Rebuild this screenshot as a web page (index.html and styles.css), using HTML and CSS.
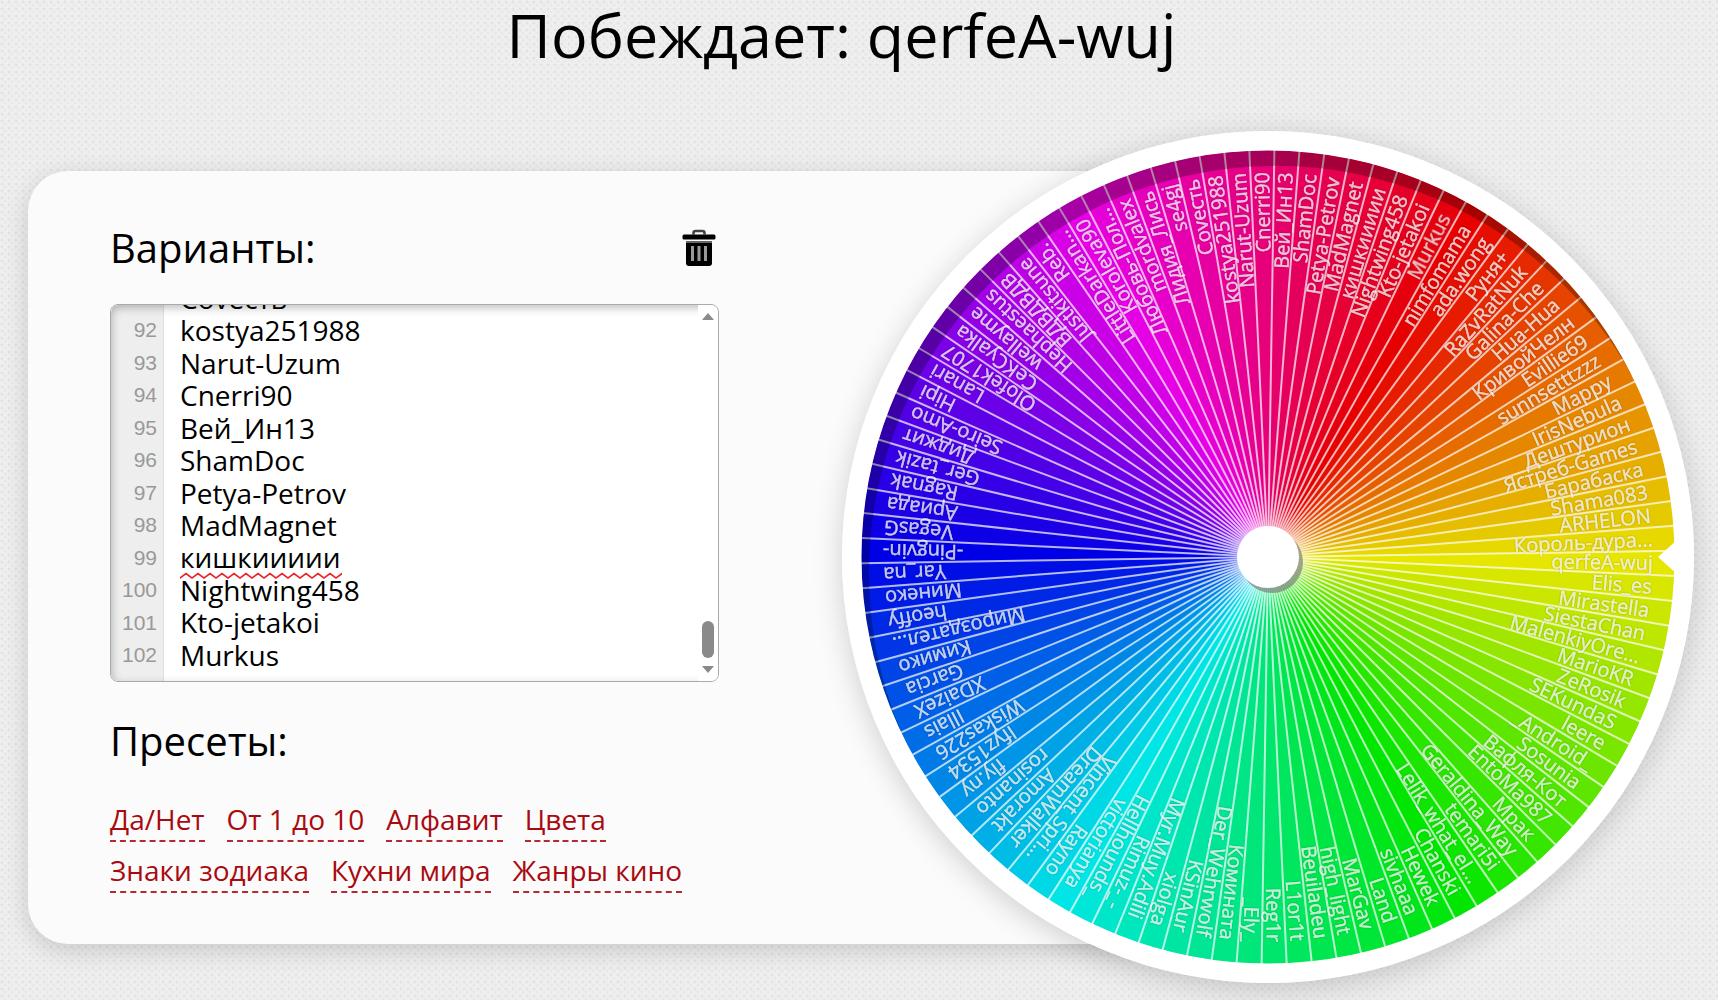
FILE: index.html
```html
<!DOCTYPE html>
<html lang="ru">
<head>
<meta charset="utf-8">
<meta name="viewport" content="width=device-width, initial-scale=1">
<title>Колесо выбора</title>
<link rel="stylesheet" href="styles.css">
</head>
<body>
<header class="result">
  <h1>Побеждает: qerfeA-wuj</h1>
</header>
<main class="stage">
  <section class="panel">
    <div class="panel-content">
      <div class="panel-head">
        <h2><label for="options">Варианты:</label></h2>
        <button class="clear" type="button" aria-label="Очистить">
          <svg viewBox="0 0 34 38" width="34" height="38" aria-hidden="true">
            <path d="M11.500 5.500V4q0-2 2-2h7q2 0 2 2v1.500" fill="none" stroke="#444" stroke-width="2.600"/>
            <rect x="0.500" y="5.500" width="33" height="5" rx="1.500" fill="#000"/>
            <path d="M4 12h26v22q0 3-3 3H7q-3 0-3-3z" fill="#000"/>
            <path d="M4 13h26" stroke="#666" stroke-width="2"/>
            <path d="M10.500 17v15M17 17v15M23.500 17v15" stroke="#999" stroke-width="3"/>
          </svg>
        </button>
      </div>
      <div class="editor">
        <ol class="gutter" id="gutter"></ol>
        <textarea id="options" spellcheck="false"></textarea>
        <svg class="squiggle" height="8" aria-hidden="true">
          <defs><pattern id="wave" width="12" height="8" patternUnits="userSpaceOnUse"><path d="M-3 4L0 6L6 1.500L12 6L15 4" fill="none" stroke="#e8262c" stroke-width="1.800"/></pattern></defs>
          <rect width="100%" height="8" fill="url(#wave)"/>
        </svg>
        <div class="scrollbar" aria-hidden="true">
          <span class="arrow up"></span>
          <span class="thumb"></span>
          <span class="arrow down"></span>
        </div>
      </div>
      <h2 class="presets-title">Пресеты:</h2>
      <nav class="presets">
        <a href="#yesno">Да/Нет</a>
        <a href="#numbers">От 1 до 10</a>
        <a href="#alphabet">Алфавит</a>
        <a href="#colors">Цвета</a>
        <a href="#zodiac">Знаки зодиака</a>
        <a href="#cuisines">Кухни мира</a>
        <a href="#genres">Жанры кино</a>
      </nav>
    </div>
  </section>
  <div class="wheel">
    <svg id="wheel" viewBox="-426 -426 852 852" role="img" aria-label="Колесо">
      <circle r="426" fill="#fff"/>
      <g id="sectors"></g>
      <g id="rays"></g>
      <path class="depth" fill-rule="evenodd" d="M-407 0a407 407 0 1 0 814 0a407 407 0 1 0 -814 0zM-399 16a407 407 0 1 0 814 0a407 407 0 1 0 -814 0z"/>
      <g id="names"></g>
      <circle r="416" fill="none" stroke="#fff" stroke-width="19"/>
      <path class="pointer" d="M390 0L409 -17V17z"/>
      <circle class="hub-shadow" cx="4" cy="5" r="31"/>
      <circle r="31" fill="#fff"/>
    </svg>
  </div>
</main>
<script src="wheel.js"></script>
</body>
</html>
```
FILE: wheel.js
```javascript
const options = [
  "nimfomama", "ada.wong", "Руня+", "RaZvRatNuk", "Galina-Che", "Hua-Hua", "КривойЧелн", "Evillie69",
  "sunnsetttzzz", "Mappy", "IrisNebula", "Дештурион", "Ястреб-Games", "Барабаска", "Shama083", "ARHELON",
  "Король-дура...", "qerfeA-wuj", "Elis_es", "Mirastella", "SiestaChan", "MalenkiyOre...", "MarioKR",
  "ZeRosik", "SEKundaS", "leere", "_Android_", "Sosunia", "Вафля-Кот", "EntoMa987", "Мрак",
  "Geraldina_Way", "temari5i", "Lelik_what_el...", "Chanski", "Hewek", "sivhaaa", "Land", "MarGav",
  "high_light", "Beuiladeu", "L1or1t", "Reg1r", "_Ely_", "Комината", "Der_Wehrwolf", "KSinAur", "xiolga",
  "Myr.Muy.Adili", "Rimuz-_-", "Hellhounds_", "victorianya", "Rayno", "Vincent_Spri...", "DreamWalker",
  "Amorakt", "rosinanto", "fly.ny", "Ifyz1534", "Wiskas226", "Illais", "XDaizeX", "Garcia", "Кимико",
  "Мироздател...", "heoffy", "Минеко", "Yar_na", "-Pingvin-", "VegasG", "Ариада", "Ragnak", "Ger_tazik",
  "Диджит", "Seiro-Amo", "Hipi", "Lanari", "Olofek1707", "CeKCyalka", "wellayme", "Hephaestus",
  "ВДВДВДВ", "Justkitsune", "Reb.", "LittleDarkan...", "Koroleva90", "Любовь-Пол...", "mordvalex",
  "Лидия_Лись", "se4gj", "Covecть", "kostya251988", "Narut-Uzum", "Cnerri90", "Вей_Ин13", "ShamDoc",
  "Petya-Petrov", "MadMagnet", "кишкиииии", "Nightwing458", "Kto-jetakoi", "Murkus"
];

const textarea = document.getElementById("options");
const gutter = document.getElementById("gutter");
textarea.value = options.join("\n");
options.forEach((_, i) => {
  const li = document.createElement("li");
  const number = document.createElement("span");
  number.textContent = i + 1;
  li.append(number);
  gutter.append(li);
});
textarea.addEventListener("scroll", () => { gutter.scrollTop = textarea.scrollTop; });

function svg(tag, attrs, parent) {
  const el = document.createElementNS("http://www.w3.org/2000/svg", tag);
  for (const key in attrs) el.setAttribute(key, attrs[key]);
  parent.append(el);
  return el;
}

const RADIUS = 407;
const step = 360 / options.length;
const start = -90 + 0.9 + 8 * step;
const point = (deg, r) => {
  const a = deg * Math.PI / 180;
  return (Math.cos(a) * r).toFixed(2) + " " + (Math.sin(a) * r).toFixed(2);
};
const sectors = document.getElementById("sectors");
const rays = document.getElementById("rays");
const names = document.getElementById("names");

options.forEach((name, i) => {
  const from = start + i * step;
  svg("path", {
    d: `M0 0L${point(from, RADIUS)}A${RADIUS} ${RADIUS} 0 0 1 ${point(from + step + 0.1, RADIUS)}z`,
    fill: `hsl(${i * step}, 100%, 45%)`
  }, sectors);
  svg("path", { d: `M0 0L${point(from, RADIUS)}` }, rays);
  svg("text", { x: 385, y: 7, transform: `rotate(${from + step / 2})` }, names).textContent = name;
});

function scrollToEnd() {
  textarea.scrollTop = textarea.scrollHeight;
  gutter.scrollTop = gutter.scrollHeight;
}
scrollToEnd();
window.addEventListener("load", scrollToEnd);
```
FILE: styles.css
```css
* {
  box-sizing: border-box;
}

body {
  margin: 0;
  min-height: 100vh;
  overflow-x: hidden;
  font-family: "Open Sans", "Noto Sans", sans-serif;
  color: #000;
  background-color: #efefef;
  background-image:
    radial-gradient(circle at 2px 2px, #e3e3e3 1px, transparent 2px),
    radial-gradient(circle at 5px 5px, #e8e8e8 1px, transparent 2px);
  background-size: 7px 7px, 7px 7px;
}

h1,
h2 {
  margin: 0;
  font-weight: 400;
}

.result {
  height: 131px;
  padding-right: 35px;
  text-align: center;
}

.result h1 {
  font-size: 61px;
  line-height: 70px;
}

.stage {
  display: flex;
  align-items: center;
  padding: 0 24px 16px 28px;
}

.panel {
  flex: 1;
  min-width: 0;
  margin-right: -426px;
  padding: 50px 82px 51px;
  border-radius: 40px;
  background: #fbfbfb;
  box-shadow: 0 6px 24px rgba(0, 0, 0, 0.16);
}

.panel-content {
  max-width: 609px;
}

.panel h2 {
  font-size: 40px;
  line-height: 54px;
}

.panel-head {
  display: flex;
  align-items: center;
  justify-content: space-between;
  margin-bottom: 29px;
}

.clear {
  display: block;
  height: 38px;
  margin-right: 3px;
  padding: 0;
  border: 0;
  background: none;
  cursor: pointer;
}

.clear svg {
  display: block;
}

.editor {
  position: relative;
  display: flex;
  height: 378px;
  overflow: hidden;
  border: 1px solid #aaa;
  border-radius: 8px;
  background: #fff;
}

.editor::after {
  content: "";
  position: absolute;
  inset: 0;
  border-radius: 7px;
  box-shadow: inset 1px 3px 9px rgba(0, 0, 0, 0.25);
  pointer-events: none;
}

.gutter {
  width: 53px;
  margin: 0;
  padding: 0 6px 9px 0;
  overflow: hidden;
  list-style: none;
  border-right: 1px solid #ddd;
  background: #eee;
  font-size: 28px;
}

.gutter li {
  display: flex;
  align-items: center;
  justify-content: flex-end;
  height: 1.16em;
}

.gutter span {
  font-family: "Liberation Sans", Arial, sans-serif;
  font-size: 21px;
  line-height: 24px;
  color: #999;
}

.editor textarea {
  flex: 1;
  min-width: 0;
  margin: 0;
  padding: 0 16px 9px;
  border: 0;
  outline: 0;
  resize: none;
  scrollbar-width: none;
  background: none;
  color: #000;
  font-family: inherit;
  font-size: 28px;
  line-height: 1.16;
  white-space: pre;
}

.squiggle {
  position: absolute;
  left: 69px;
  bottom: 101px;
  width: 162px;
}

.scrollbar {
  z-index: 1;
  display: flex;
  flex-direction: column;
  align-items: center;
  width: 20px;
  padding: 8px 0;
  background: #fff;
}

.arrow {
  border: 6px solid transparent;
}

.arrow.up {
  border-top: 0;
  border-bottom: 7px solid #8a8a8a;
}

.arrow.down {
  border-bottom: 0;
  border-top: 7px solid #8a8a8a;
}

.thumb {
  width: 12px;
  height: 37px;
  margin: auto 0 8px;
  border-radius: 6px;
  background: #8a8a8a;
}

.panel .presets-title {
  margin: 31px 0 32px;
  line-height: 56px;
}

.presets {
  display: flex;
  flex-wrap: wrap;
  gap: 10px 22px;
}

.presets a {
  padding-bottom: 3px;
  border-bottom: 2px dashed #b8292f;
  color: #a80a10;
  font-size: 28px;
  line-height: 36px;
  text-decoration: none;
}

.wheel {
  position: relative;
  flex: none;
  width: 852px;
  border-radius: 50%;
  box-shadow: 0 6px 30px rgba(0, 0, 0, 0.18);
}

.wheel svg {
  display: block;
  width: 100%;
}

#rays {
  fill: none;
  stroke: rgba(255, 255, 255, 0.7);
  stroke-width: 2;
}

.depth {
  fill: rgba(0, 0, 0, 0.28);
}

#names {
  fill: #fff;
  stroke: #fff;
  stroke-width: 0.4px;
  opacity: 0.82;
  font-size: 20px;
  text-anchor: end;
  text-shadow: 0 0 2px rgba(0, 0, 0, 0.3);
}

.pointer {
  fill: #fff;
}

.hub-shadow {
  fill: rgba(110, 110, 110, 0.6);
}
```
